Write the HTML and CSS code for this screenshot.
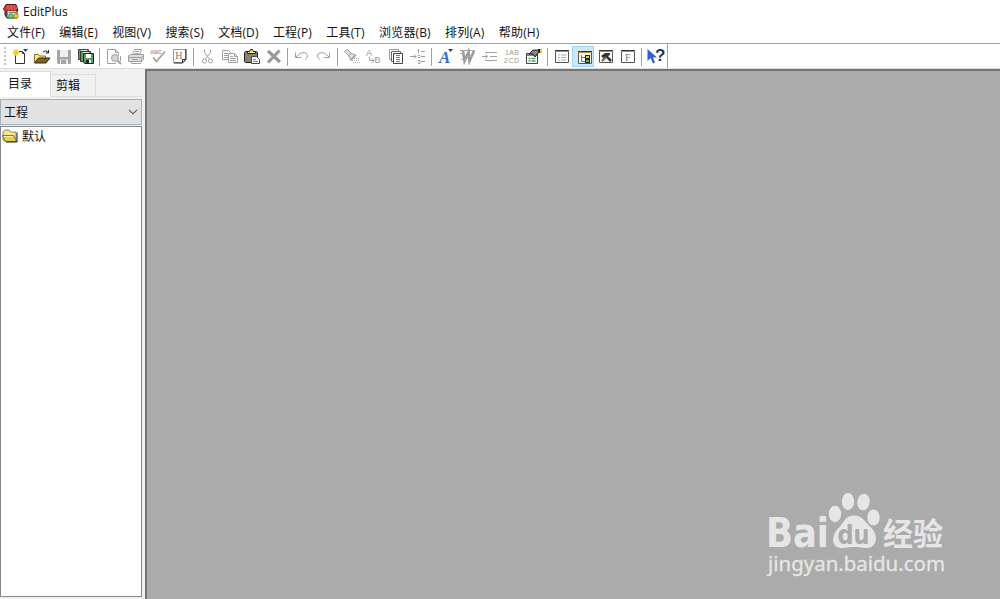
FILE: index.html
```html
<!DOCTYPE html>
<html lang="zh-CN">
<head>
  <meta charset="UTF-8" />
  <meta name="viewport" content="width=device-width, initial-scale=1.0" />
  <title>EditPlus</title>
  <link rel="stylesheet" href="styles.css">
</head>
<body>
  <div class="app">
    <div class="titlebar">
      <svg class="app-icon" viewBox="0 0 16 16">
        <path d="M3 6h11v9H4l-2-3z" fill="#ddd" stroke="#222"/>
        <path d="M3 1.500h10l2 6H5L3 9 .500 6z" fill="#d73a32" stroke="#5a1512"/>
        <path d="M4 3h9M4 5h10M5 7h9" stroke="#f26a60" stroke-dasharray="2 1"/>
        <path d="M1.500 7l3 2v6l-3-3z" fill="#444"/>
        <path d="M6 9.500h7" stroke="#777"/>
        <circle cx="8" cy="13" r="2.6" fill="#2a9a3c"/><circle cx="13" cy="13" r="2.6" fill="#c88a10"/>
        <path d="M6.500 13h3M8 11.500v3" stroke="#b8f0b0"/><path d="M11.500 13h3M13 11.500v3" stroke="#fff04a"/>
      </svg>
      <span>EditPlus</span>
    </div>

    <div class="menubar">
      <span>文件(F)</span>
      <span>编辑(E)</span>
      <span>视图(V)</span>
      <span>搜索(S)</span>
      <span>文档(D)</span>
      <span>工程(P)</span>
      <span>工具(T)</span>
      <span>浏览器(B)</span>
      <span>排列(A)</span>
      <span>帮助(H)</span>
    </div>

    <div class="toolbar">
      <div class="tools">
        <div class="grip"></div>
        <!-- File -->
        <div class="group">
          <div class="btn"><svg viewBox="0 0 16 16">
            <path d="M3.500 6v8.500h9V4.500l-2-2H7" fill="#fff" stroke="#333"/>
            <path d="M10.500 2.500v2h2" fill="none" stroke="#333"/>
            <path d="M4 0v7M.500 3.500h7M1.500 1l5 5M6.500 1l-5 5" stroke="#f4c81c" stroke-width="1.100"/>
            <path d="M11 0h5l-2.500 3z" fill="#1f3f7f"/>
          </svg></div>
          <div class="btn"><svg viewBox="0 0 16 16">
            <path d="M.500 13.500v-8h4l1 1.500h6v3" fill="#ffe680" stroke="#8b7320"/>
            <path d="M.500 14l4-5H16l-4 5z" fill="#7a6426" stroke="#30280e"/>
            <path d="M9 3q2-2.500 5 0M14.500 1v3h-3" fill="none" stroke="#222"/>
          </svg></div>
          <div class="btn"><svg class="dim" viewBox="0 0 16 16">
            <path d="M1 1h14v14H2l-1-1z" fill="#a5a5a5" stroke="none"/><path d="M4 1h8v7H4zM4 10.500h8V15H4z" fill="#eee" stroke="none"/>
            <path d="M5 11h5v4H5z" fill="#a5a5a5" stroke="none"/>
          </svg></div>
          <div class="btn"><svg viewBox="0 0 16 16">
            <path d="M.500.500h10v10h-10z" fill="#58a068" stroke="#444"/><path d="M3 1h6v2H3z" fill="#e8f2e8"/>
            <path d="M2.500 2.500h10v10h-10z" fill="#58a068" stroke="#333"/><path d="M5 3h6v2H5z" fill="#e8f2e8"/>
            <path d="M5.500 4.500h10v10h-9l-1-1z" fill="#58a068" stroke="#222"/>
            <path d="M8 5h5v4H8z" fill="#fff"/><path d="M8 11h5v3H8z" fill="#222"/><path d="M11 11h2v3h-2z" fill="#fff"/>
          </svg></div>
        </div>
        <div class="sep"></div>
        <div class="group">
          <div class="btn"><svg class="dim" viewBox="0 0 16 16">
            <path d="M10 14.500H1.500V.500h8l3 3v3M9.500.500v3h3"/>
            <circle cx="9" cy="9" r="3.500" fill="#d5d5d5"/><path d="M11.500 11.500l3.500 3.500" stroke-width="2"/><path d="M14.500 7v5"/>
          </svg></div>
          <div class="btn"><svg class="dim" viewBox="0 0 16 16">
            <path d="M4.500 5.500l2-5h7l-2 5M7 2.500h4M6.500 4.500h4"/>
            <path d="M.500 6.500l2-1h13v5l-2 2H.500z" fill="#ddd"/><path d="M.500 8.500h13l2-2M13.500 8.500v4M2.500 12.500l1 2h9l1-2M4 10.500h6"/>
          </svg></div>
          <div class="btn"><svg class="dim" viewBox="0 0 16 16">
            <text class="tiny" x="0" y="5" textLength="12" lengthAdjust="spacingAndGlyphs">ABC</text>
            <path d="M3 8.500l3.500 4L15 2.500" stroke-width="1.600"/>
          </svg></div>
          <div class="btn"><svg viewBox="0 0 16 16">
            <path d="M1.500.500h12v10l-3 3h-9z" fill="#fff" stroke="#999"/>
            <path d="M14 0v10.500L10.500 14H2M10.500 13.500v-3h3" fill="none" stroke="#222"/>
            <text class="serif" x="3.300" y="9.500">H</text>
          </svg></div>
        </div>
        <div class="sep"></div>
        <!-- Clipboard -->
        <div class="group">
          <div class="btn"><svg class="dim" viewBox="0 0 16 16">
            <path d="M4.500.500v3l5 6.500M10.500.500v3l-5 6.500"/><circle cx="4.500" cy="12" r="2"/><circle cx="10.500" cy="12" r="2"/>
          </svg></div>
          <div class="btn"><svg class="dim" viewBox="0 0 16 16">
            <path d="M.500 1.500h6l2 2v7h-8z" fill="#fff"/><path d="M2 4.500h4M2 6.500h4M2 8.500h4"/>
            <path d="M6.500 4.500h6l3 3v6h-9z" fill="#fff"/><path d="M12.500 4.500v3h3M8 7.500h3M8 9.500h6M8 11.500h6"/>
          </svg></div>
          <div class="btn"><svg viewBox="0 0 16 16">
            <path d="M.500 3.500l1-1h11l1 1v10H1.500l-1-1z" fill="#8b806a" stroke="#222"/>
            <path d="M3.500 4.500v-2h2l1-2h2l1 2h2v2z" fill="#f2db70" stroke="#222"/>
            <path d="M7.500 7.500h5l3 3v4h-8z" fill="#fff" stroke="#314b83"/><path d="M9 10.500h3M9 12.500h5" stroke="#4a9a64"/>
          </svg></div>
          <div class="btn"><svg class="dim" viewBox="0 0 16 16">
            <path d="M2 2L14 13M13.500 1.500L2 13.500" stroke="#999" stroke-width="3.200"/>
          </svg></div>
        </div>
        <div class="sep"></div>
        <div class="group">
          <div class="btn"><svg class="dim" viewBox="0 0 16 16">
            <path d="M1.500 3.500v5H7M2 8q4-5 8-4.500 3.500.500 3.500 3.500 0 2-2.500 3.500"/>
          </svg></div>
          <div class="btn"><svg class="dim" viewBox="0 0 16 16">
            <path d="M13.500 3.500v5H8M13 8Q9 3 5 3.500 1.500 4 1.500 7q0 2 2.500 3.500"/>
          </svg></div>
        </div>
        <div class="sep"></div>
        <!-- Search -->
        <div class="group">
          <div class="btn"><svg class="dim" viewBox="0 0 16 16">
            <path d="M.500 2.500l3-2 4 4 4 1.500-5 5-1.500-4-4-4z" fill="#ddd"/><path d="M4 7l4-3"/><path d="M12 6L6.500 11.500" stroke-width="1.600"/>
            <path d="M10 9.500h5M8 11.500h8M9 13.500h7" stroke-dasharray="1 1"/>
          </svg></div>
          <div class="btn"><svg class="dim" viewBox="0 0 16 16">
            <text class="letter" x="0" y="7">A</text><text class="letter" x="8.500" y="14">B</text>
            <path d="M3.500 8v3.500H8M6 9.500l2 2-2 2"/>
          </svg></div>
          <div class="btn"><svg viewBox="0 0 16 16">
            <path d="M1.500.500h9v10h-9z" fill="#fff" stroke="#999"/><path d="M3.500 2.500h9v10h-9z" fill="#fff" stroke="#666"/>
            <path d="M5.500 4.500h9v10h-9z" fill="#fff" stroke="#444"/>
            <path d="M8 6.500h4M8 8.500h4M8 10.500h4M8 12.500h4" stroke="#4a9a5c"/>
          </svg></div>
          <div class="btn"><svg class="dim" viewBox="0 0 16 16">
            <path d="M0 7.500h6M4 5.500l2 2-2 2M8.500 0v4M7.500 1.500h1M8 6.500h2M8 8.500h2M8 11.500h2v3H8M11 2.500h4M11 7.500h4M11 12.500h4"/>
          </svg></div>
        </div>
        <div class="sep"></div>
        <!-- Document -->
        <div class="group">
          <div class="btn"><svg viewBox="0 0 16 16">
            <text class="font-a" x="1" y="13.500">A</text><path d="M10 0h5l-2.500 3z" fill="#1f3f7f"/>
          </svg></div>
          <div class="btn"><svg class="dim" viewBox="0 0 16 16">
            <path d="M3 2l1.500 10 4-9 1 9 4.500-10" stroke-width="2.600" stroke="#999"/>
            <path d="M0 1.500h15M0 4.500h4M6 7.500h7M1 10.500h5" stroke="#aaa"/>
          </svg></div>
          <div class="btn"><svg class="dim" viewBox="0 0 16 16">
            <path d="M3 3.500h12M8 7.500h7M0 7.500h5M3.500 5.500l2 2-2 2M3 11.500h12"/>
          </svg></div>
          <div class="btn"><svg class="dim" viewBox="0 0 16 16">
            <text class="digits" x="1" y="6" textLength="14">1AB</text><text class="digits" x="0" y="13.500" textLength="15">2CD</text>
          </svg></div>
          <div class="btn"><svg viewBox="0 0 16 16">
            <path d="M.500 4.500h11v10H.500z" fill="#fff" stroke="#444"/><path d="M1 5h10v2H1z" fill="#888"/>
            <path d="M2.500 9.500h2M5.500 9.500h4M2.500 12h2M5.500 12h4" stroke="#42a456" stroke-width="1.300"/>
            <path d="M3 5l4-4h6L13.500 3 11 5 9 8 7 5z" fill="#888" stroke="#222"/>
            <path d="M12 0h2v4h-2z" fill="#222"/><path d="M14 0h2v4h-2z" fill="#e9c521"/>
          </svg></div>
        </div>
        <div class="sep"></div>
        <!-- Panels -->
        <div class="group">
          <div class="btn"><svg viewBox="0 0 16 16">
            <path d="M1.500 2.500h13v11h-13z" fill="#fff" stroke="#555"/><path d="M1 1h14v1H1z" fill="#333"/><path d="M1 2.500h14" stroke="#b88d32"/>
            <path d="M4 6h2M4 8.500h2M4 11h2" stroke="#e69a80"/><path d="M7 6h5M7 8.500h5M7 11h5" stroke="#aaa"/>
          </svg></div>
          <div class="btn active"><svg viewBox="0 0 16 16">
            <path d="M1.500 2.500h13v11h-13z" fill="#fff" stroke="#555"/><path d="M1 1h14v1H1z" fill="#333"/><path d="M1 2.500h14" stroke="#b88d32"/>
            <path d="M4.500 5v6.500H8M5 7.500h3" fill="none" stroke="#777"/>
            <path d="M8 5h5v8H8z" fill="#222"/><path d="M9 6h3v2H9z" fill="#e8ce3c"/><path d="M9 10h3v2H9z" fill="#57b65f"/>
          </svg></div>
          <div class="btn"><svg viewBox="0 0 16 16">
            <path d="M1.500 2.500h13v11h-13z" fill="#fff" stroke="#555"/><path d="M1 1h14v1H1z" fill="#333"/><path d="M1 2.500h14" stroke="#b88d32"/>
            <path d="M3 7l4-3h5v2l-2 1 4 4-2 2-4.500-5L5 9z" fill="#3c3025"/><path d="M4 12l4-4" stroke="#765a38" stroke-width="2"/>
          </svg></div>
          <div class="btn"><svg viewBox="0 0 16 16">
            <path d="M1.500 2.500h13v11h-13z" fill="#fff" stroke="#555"/><path d="M1 1h14v1H1z" fill="#333"/><path d="M1 2.500h14" stroke="#b88d32"/>
            <text class="serif" x="5" y="12">F</text>
          </svg></div>
        </div>
        <div class="sep"></div>
        <div class="group">
          <div class="btn"><svg viewBox="0 0 16 16">
            <path d="M-.500 0v12l3-3L5 14.500l2-1L5 8.500h4z" fill="#2d62cf"/>
            <text class="help" x="7" y="12">?</text>
          </svg></div>
        </div>
      </div>
    </div>

    <div class="content">
      <div class="sidebar">
        <div class="tabs">
          <div class="tab selected">目录</div>
          <div class="tab">剪辑</div>
        </div>
        <div class="dropdown">
          <span>工程</span>
          <svg class="chevron" viewBox="0 0 10 6"><path d="M1 .800l4 4 4-4" fill="none" stroke="#555" stroke-width="1.100"/></svg>
        </div>
        <div class="tree">
          <div class="tree-item">
            <svg class="folder" viewBox="0 0 16 14">
              <path d="M1 11V3l2-2h4l2 2h5v9H2z" fill="#f7e48b" stroke="#888"/>
              <path d="M.500 6.500h11l3 6h-11z" fill="#e9cd4c" stroke="#8a7840"/>
              <path d="M2 7.500h9" stroke="#fff3a8"/><path d="M15 3.500V13H4" fill="none" stroke="#222"/>
            </svg>
            <span>默认</span>
          </div>
        </div>
      </div>
      <div class="workspace">
        <svg class="watermark" viewBox="0 0 180 91">
          <text class="wm-logo" x="-2" y="57" textLength="63" lengthAdjust="spacingAndGlyphs">Bai</text>
          <ellipse cx="67" cy="24" rx="6.200" ry="8.300"/>
          <ellipse cx="80" cy="11.500" rx="6.200" ry="8.500"/>
          <ellipse cx="95.500" cy="12" rx="6.200" ry="8.300" transform="rotate(8 95.500 12)"/>
          <ellipse cx="105.500" cy="27.500" rx="6.200" ry="8"/>
          <path d="M86 25.500c-9 0-10 7-15 12-8 7-8 20 2 20.500 5 0 7-1 13-1s8 1 13 1c10 0 12-13 4-20.500-6-5-8-12-17-12z"/>
          <text class="wm-du" x="69.500" y="54" textLength="32" lengthAdjust="spacingAndGlyphs">du</text>
          <text class="wm-cn" x="115" y="55" textLength="60" lengthAdjust="spacingAndGlyphs">经验</text>
          <text class="wm-url" x="0" y="81" textLength="177" lengthAdjust="spacingAndGlyphs">jingyan.baidu.com</text>
        </svg>
      </div>
    </div>
  </div>
</body>
</html>
```
FILE: styles.css
```css
/* Reset & Body */
* { box-sizing: border-box; margin: 0; padding: 0; }
html, body { width: 100%; height: 100%; }
body {
  font-family: "Open Sans", "Noto Sans CJK SC", sans-serif;
  font-size: 12px;
  color: #111;
  overflow: hidden;
  background: #fff;
}
svg { display: block; flex: none; overflow: visible; }
.app { height: 100vh; display: flex; flex-direction: column; }

/* Title and menu */
.titlebar { height: 23px; display: flex; align-items: center; padding: 0 3px; gap: 4px; flex: none; }
.app-icon { width: 16px; height: 16px; margin-top: -2px; }
.menubar { height: 20px; display: flex; align-items: center; line-height: 18px; letter-spacing: 0.15px; flex: none; }
.menubar span { padding: 0 7.3px 0 7px; white-space: nowrap; }

/* Toolbar */
.toolbar { height: 26px; border-top: 1px solid #a0a0a0; border-bottom: 1px solid #dcdcdc; flex: none; }
.tools { width: 668px; height: 24px; padding-top: 1px; display: flex; align-items: center; border-right: 1px solid #a0a0a0; }
.grip { width: 8px; height: 20px; padding-left: 4px; }
.grip::before { content: ""; display: block; width: 2px; height: 20px; background: repeating-linear-gradient(#c4c4c4 0 2px, #fff 2px 4px); }
.group { display: flex; }
.btn { width: 22px; height: 21px; padding: 1px 0 0 2px; display: flex; align-items: center; justify-content: center; }
.btn svg { width: 16px; height: 16px; }
.btn.active { padding: 3px 0 0 4px; background: #cce8ff; border: 1px solid #99d1ff; }
.sep { width: 6px; height: 18px; border-left: 3px solid #fff; background: linear-gradient(90deg, #a0a0a0 1px, #fff 1px); }
.dim { fill: none; stroke: #a0a0a0; }
.dim text { fill: #999; stroke: none; }
.tiny { font: bold 6px "Liberation Sans", sans-serif; }
.serif { font: 10px "Liberation Serif", serif; fill: #777; }
.letter { font: 9px "Liberation Sans", sans-serif; }
.font-a { font: italic bold 17px "Liberation Serif", serif; fill: #3469cc; }
.digits { font: 7px "Liberation Sans", sans-serif; }
.help { font: bold 17px "Liberation Sans", sans-serif; fill: #17366d; }

/* Sidebar */
.content { flex: 1; min-height: 0; display: flex; }
.sidebar { width: 145px; padding: 2px 3px 2px 0; background: #f0f0f0; display: flex; flex-direction: column; }
.tabs { height: 28px; display: flex; align-items: flex-end; padding-bottom: 2px; }
.tab { width: 45px; height: 23px; padding: 1px 5px; line-height: 20px; border: 1px solid #dcdcdc; border-left: none; }
.tab.selected { width: 51px; height: 26px; padding: 2px 0 0 8px; background: #fff; border-bottom: none; }
.tabs::after { content: ""; flex: 1; border-bottom: 1px solid #dcdcdc; }
.dropdown {
  height: 26px; padding: 0 3px;
  display: flex; align-items: center; justify-content: space-between;
  background: #e1e2e4; border: 1px solid #a3b1bd;
}
.chevron { width: 10px; height: 6px; }
.tree { flex: 1; margin-top: 1px; padding: 0 1px; background: #fff; border: 1px solid #828790; }
.tree-item { height: 18px; display: flex; align-items: center; gap: 4px; }
.folder { width: 16px; height: 14px; }

/* Workspace */
.workspace {
  flex: 1; display: flex; align-items: flex-end; justify-content: flex-end;
  padding: 0 52px 18px 0;
  background: #ababab;
  border-top: 2px solid #747474; border-left: 2px solid #747474;
}
.watermark { width: 180px; height: 91px; fill: #e6e6e6; }
.wm-logo { font: bold 40px "DejaVu Sans", sans-serif; }
.wm-du { font: bold 26px "DejaVu Sans", sans-serif; fill: #ababab; }
.wm-cn { font: bold 31px "Noto Sans CJK SC", sans-serif; }
.wm-url { font: 20px "Noto Sans", "Open Sans", sans-serif; stroke: #e6e6e6; stroke-width: 0.3px; }
```
